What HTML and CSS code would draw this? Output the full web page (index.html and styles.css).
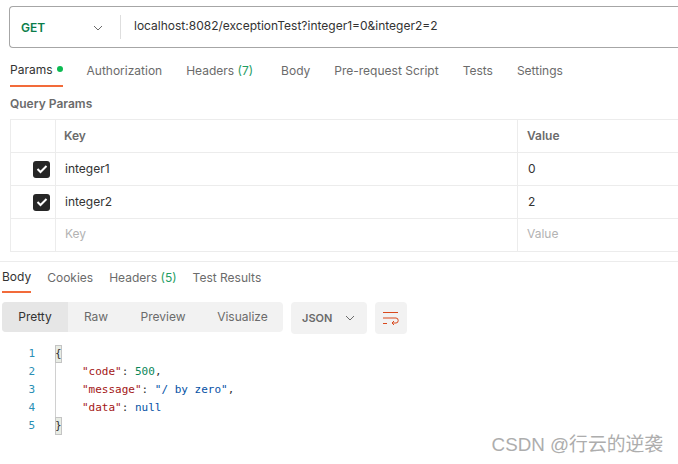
FILE: index.html
```html
<!DOCTYPE html>
<html lang="en">

<head>
    <meta charset="UTF-8">
    <title>exceptionTest</title>
    <link rel="stylesheet" href="styles.css">
</head>

<body>
    <div class="url-bar">
        <div class="method">
            <span>GET</span>
            <svg class="chev" width="10" height="6" viewBox="0 0 10 6"><path d="M1 1l4 4 4-4" /></svg>
        </div>
        <div class="url"><span>localhost:8082/exceptionTest?integer1=0&amp;integer2=2</span></div>
    </div>

    <div class="tabs req-tabs">
        <div class="tab active">Params<i class="dot"></i></div>
        <div class="tab auth">Authorization</div>
        <div class="tab hdr">Headers <em>(7)</em></div>
        <div class="tab body-tab">Body</div>
        <div class="tab pre">Pre-request Script</div>
        <div class="tab tests">Tests</div>
        <div class="tab">Settings</div>
    </div>

    <div class="title">Query Params</div>

    <div class="table">
        <div class="row head">
            <div class="c-check"></div>
            <div class="c-key">Key</div>
            <div class="c-val">Value</div>
        </div>
        <div class="row">
            <div class="c-check">
                <span class="box"><svg width="12" height="10" viewBox="0 0 12 10"><path d="M1.5 5l3 3 6-6" /></svg></span>
            </div>
            <div class="c-key cell">integer1</div>
            <div class="c-val cell">0</div>
        </div>
        <div class="row">
            <div class="c-check">
                <span class="box"><svg width="12" height="10" viewBox="0 0 12 10"><path d="M1.5 5l3 3 6-6" /></svg></span>
            </div>
            <div class="c-key cell">integer2</div>
            <div class="c-val cell">2</div>
        </div>
        <div class="row empty">
            <div class="c-check"></div>
            <div class="c-key">Key</div>
            <div class="c-val">Value</div>
        </div>
    </div>

    <div class="tabs res-tabs">
        <div class="tab active">Body</div>
        <div class="tab">Cookies</div>
        <div class="tab">Headers <em>(5)</em></div>
        <div class="tab">Test Results</div>
    </div>

    <div class="toolbar">
        <div class="views">
            <div class="view on">Pretty</div>
            <div class="view raw">Raw</div>
            <div class="view prev">Preview</div>
            <div class="view vis">Visualize</div>
        </div>
        <div class="format">
            <span>JSON</span>
            <svg class="chev" width="10" height="6" viewBox="0 0 10 6"><path d="M1 1l4 4 4-4" /></svg>
        </div>
        <div class="wrap">
            <svg width="16" height="14" viewBox="0 0 16 14">
                <path d="M0 1.5h15M0 7h13a2.2 2.5 0 0 1 0 5H9M11 10l-2 2 2 2M0 12.5h4" />
            </svg>
        </div>
    </div>

    <div class="code">
        <div class="line"><span class="num">1</span><span class="brace">{</span></div>
        <div class="line"><span class="num">2</span><span class="guide"></span><span class="k">"code"</span>: <span class="n">500</span>,</div>
        <div class="line"><span class="num">3</span><span class="guide"></span><span class="k">"message"</span>: <span class="s">"/ by zero"</span>,</div>
        <div class="line"><span class="num">4</span><span class="guide"></span><span class="k">"data"</span>: <span class="s">null</span></div>
        <div class="line"><span class="num">5</span><span class="brace">}</span></div>
    </div>

    <div class="mark">CSDN @行云的逆袭</div>
</body>

</html>
```

FILE: styles.css
```css
* {
    box-sizing: border-box;
}

html,
body {
    height: 100%;
}

body {
    margin: 0;
    position: relative;
    overflow: hidden;
    background-color: #fff;
    color: #6b6b6b;
    font-family: Inter, "Liberation Sans", sans-serif;
    font-size: 12px;
}

svg {
    fill: none;
    display: block;
}

.chev path {
    stroke: #6b6b6b;
    stroke-width: 1;
}

/* url bar */
.url-bar {
    display: flex;
    align-items: center;
    height: 42px;
    margin: 6px 0 0 9px;
    border: 1px solid #a6a6a6;
    border-right: 0;
    border-radius: 4px 0 0 4px;
}

.method {
    display: flex;
    align-items: center;
    justify-content: space-between;
    width: 110px;
    padding: 1px 17px 0 11px;
    color: #0b7d4a;
    font-weight: 600;
}

.url {
    height: 24px;
    padding-left: 13px;
    border-left: 1px solid #dedede;
    color: #333;
    line-height: 22px;
}

/* tabs */
.tabs {
    display: flex;
}

.tab {
    display: flex;
    align-items: center;
    height: 100%;
    white-space: pre;
}

.tab em {
    font-style: normal;
    color: #1f9d63;
}

.tab.active {
    color: #333;
    border-bottom: 2px solid #f26b3a;
}

.req-tabs {
    height: 32px;
    margin: 7px 0 0 10px;
}

.req-tabs .tab {
    margin-right: 24px;
    padding-bottom: 2px;
}

.req-tabs .hdr {
    margin-right: 28px;
}

.dot {
    width: 6px;
    height: 6px;
    margin-left: 4px;
    border-radius: 50%;
    background-color: #0cbb52;
}

.title {
    margin: 9px 0 0 10px;
    font-weight: 600;
    line-height: 15px;
}

/* params table */
.table {
    margin: 8px 0 0 10px;
    border-top: 1px solid #ececec;
}

.row {
    display: flex;
    height: 33px;
    border-bottom: 1px solid #ececec;
    border-left: 1px solid #ececec;
    line-height: 31px;
}

.c-check {
    display: flex;
    align-items: center;
    justify-content: flex-end;
    width: 45px;
    padding-right: 5px;
    border-right: 1px solid #ececec;
}

.c-key {
    width: 462px;
    padding-left: 8px;
    border-right: 1px solid #ececec;
}

.c-val {
    padding-left: 9px;
}

.head .c-key,
.head .c-val {
    font-weight: 600;
}

.cell {
    color: #333;
    padding-left: 9px;
}

.c-val.cell {
    padding-left: 10px;
}

.empty {
    color: #b3b3b3;
    line-height: 30px;
}

.empty .c-key {
    padding-left: 9px;
}

.box {
    display: flex;
    align-items: center;
    justify-content: center;
    width: 17px;
    height: 17px;
    border-radius: 3px;
    background-color: #262626;
}

.box path {
    stroke: #fff;
    stroke-width: 2;
}

/* response */
.res-tabs {
    height: 32px;
    margin-top: 9px;
    padding: 0 0 0 2px;
    border-top: 1px solid #ececec;
}

.res-tabs .tab {
    margin-right: 16px;
}

.toolbar {
    display: flex;
    gap: 8px;
    margin: 9px 0 0 2px;
}

.views {
    display: flex;
    width: 281px;
    height: 30px;
    border-radius: 4px;
    background-color: #f2f2f2;
    line-height: 29px;
}

.view {
    text-align: center;
}

.view.on {
    width: 66px;
    border-radius: 4px 0 0 4px;
    background-color: #e6e6e6;
    color: #333;
}

.raw {
    width: 56px;
}

.prev {
    width: 78px;
}

.vis {
    width: 81px;
}

.format {
    display: flex;
    align-items: center;
    justify-content: space-between;
    width: 76px;
    height: 32px;
    padding: 0 12px 0 11px;
    border-radius: 4px;
    background-color: #f2f2f2;
    font-weight: 600;
    font-size: 11px;
}

.wrap {
    display: flex;
    align-items: center;
    justify-content: center;
    width: 32px;
    height: 32px;
    border-radius: 4px;
    background-color: #f2f2f2;
}

.wrap path {
    stroke: #d9481c;
    stroke-width: 1;
}

/* code */
.code {
    margin-top: 11px;
    font-family: "DejaVu Sans Mono", "Liberation Mono", monospace;
    font-size: 11px;
    line-height: 18px;
    color: #333;
}

.line {
    display: flex;
    height: 18px;
    white-space: pre;
}

.num {
    width: 55px;
    padding-right: 20px;
    text-align: right;
    color: #2a8fb5;
}

.guide {
    width: 27px;
    border-left: 1px solid #d0d0d0;
}

.brace {
    width: 7px;
    background-color: #e8ece4;
    outline: 1px solid #c4c4c4;
    outline-offset: -1px;
}

.k {
    color: #a31515;
}

.n {
    color: #098658;
}

.s {
    color: #0451a5;
}

/* watermark */
.mark {
    position: absolute;
    right: 15px;
    bottom: 6px;
    color: #adadad;
    font-family: "Liberation Sans", "Noto Sans CJK SC", sans-serif;
    font-size: 18.8px;
    line-height: 26px;
}
```
